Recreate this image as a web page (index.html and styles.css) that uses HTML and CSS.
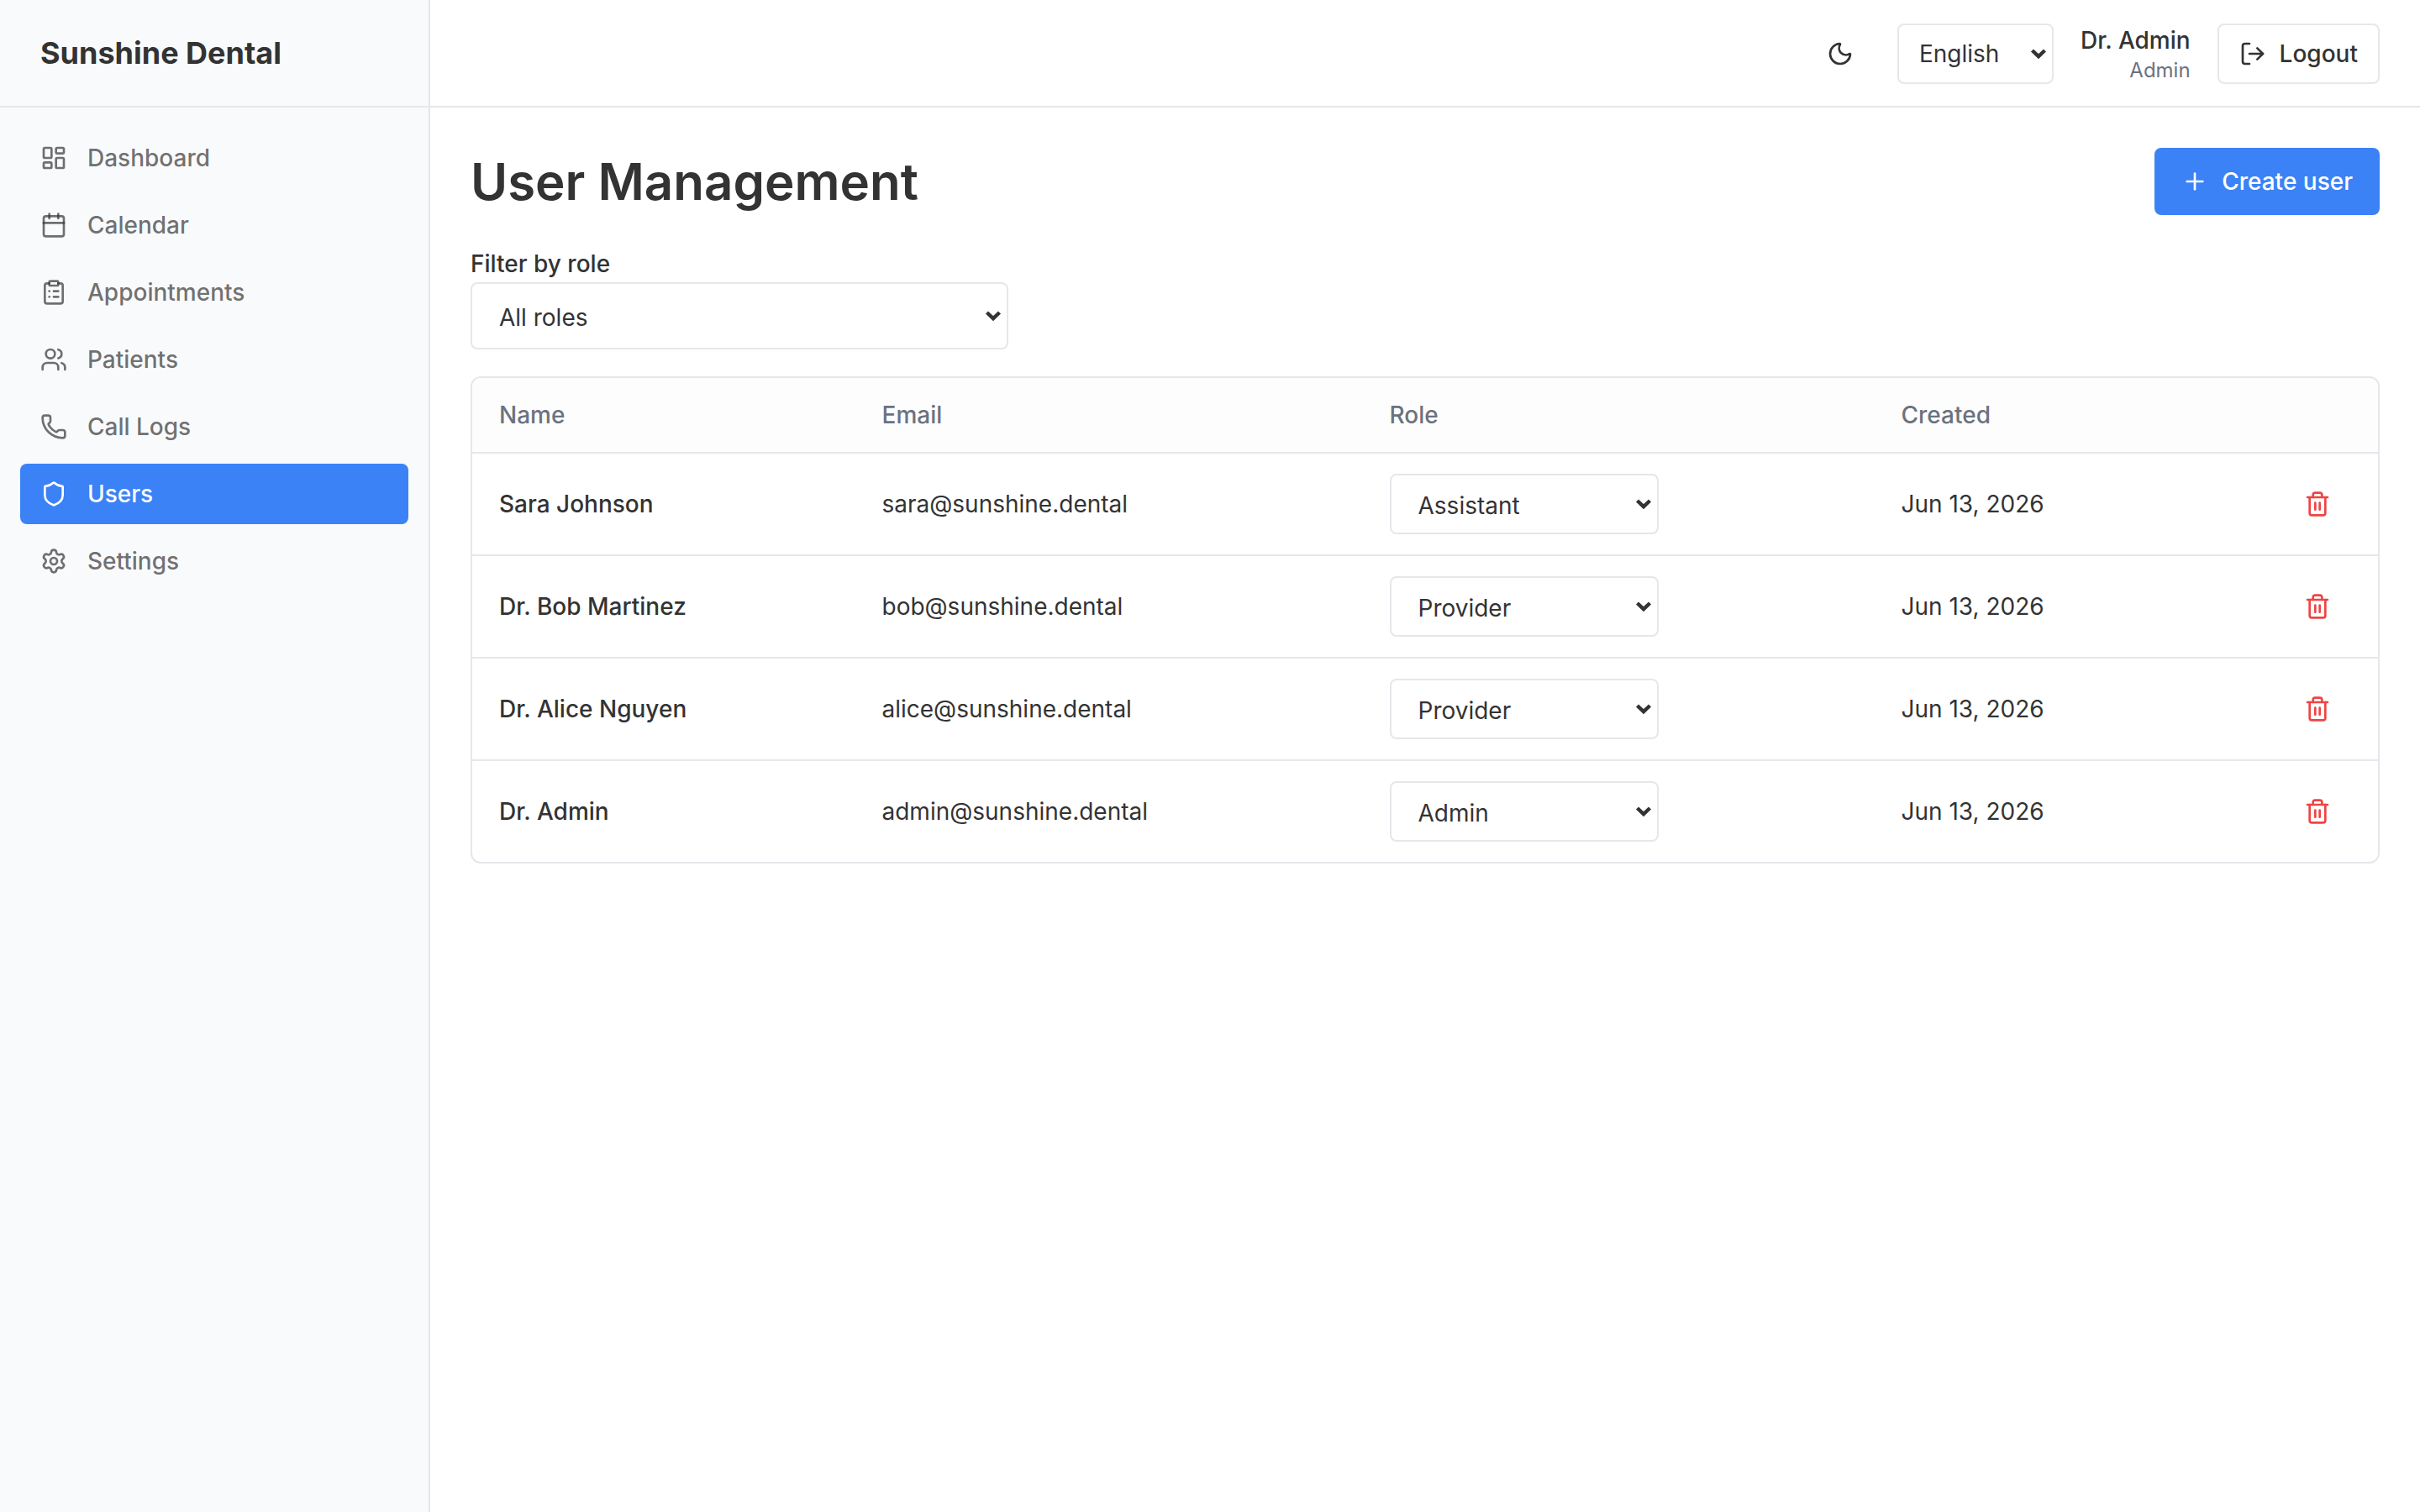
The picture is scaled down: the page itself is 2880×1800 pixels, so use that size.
FILE: index.html
```html
<!DOCTYPE html>
<html lang="en">
<head>
    <meta charset="UTF-8">
    <meta name="viewport" content="width=device-width, initial-scale=1.0">
    <title>User Management - Sunshine Dental</title>
    <link rel="stylesheet" href="styles.css">
</head>
<body>

    <!-- Shared icons -->
    <svg class="sprite" aria-hidden="true">
        <symbol id="chevron" viewBox="0 0 20 14">
            <path d="M2.5 3 10 10.2 17.5 3"/>
        </symbol>
        <symbol id="trash" viewBox="0 0 24 24">
            <path d="M3 6h18"/>
            <path d="M19 6v14a2 2 0 0 1-2 2H7a2 2 0 0 1-2-2V6"/>
            <path d="M8 6V4a2 2 0 0 1 2-2h4a2 2 0 0 1 2 2v2"/>
            <path d="M10 11v6"/>
            <path d="M14 11v6"/>
        </symbol>
    </svg>

    <!-- Sidebar -->
    <aside class="sidebar">
        <div class="brand">Sunshine Dental</div>
        <nav class="nav">
            <a class="nav-link" href="#">
                <svg class="icon" viewBox="0 0 24 24"><rect x="3" y="3" width="7" height="9" rx="1"/><rect x="14" y="3" width="7" height="5" rx="1"/><rect x="14" y="12" width="7" height="9" rx="1"/><rect x="3" y="16" width="7" height="5" rx="1"/></svg>
                Dashboard
            </a>
            <a class="nav-link" href="#">
                <svg class="icon" viewBox="0 0 24 24"><path d="M8 2v4"/><path d="M16 2v4"/><rect x="3" y="4" width="18" height="18" rx="2"/><path d="M3 10h18"/></svg>
                Calendar
            </a>
            <a class="nav-link" href="#">
                <svg class="icon" viewBox="0 0 24 24"><rect x="8" y="2" width="8" height="4" rx="1"/><path d="M16 4h2a2 2 0 0 1 2 2v14a2 2 0 0 1-2 2H6a2 2 0 0 1-2-2V6a2 2 0 0 1 2-2h2"/><path d="M12 11h4"/><path d="M12 16h4"/><path d="M8 11h.01"/><path d="M8 16h.01"/></svg>
                Appointments
            </a>
            <a class="nav-link" href="#">
                <svg class="icon" viewBox="0 0 24 24"><path d="M16 21v-2a4 4 0 0 0-4-4H6a4 4 0 0 0-4 4v2"/><path d="M16 3.128a4 4 0 0 1 0 7.744"/><path d="M22 21v-2a4 4 0 0 0-3-3.87"/><circle cx="9" cy="7" r="4"/></svg>
                Patients
            </a>
            <a class="nav-link" href="#">
                <svg class="icon" viewBox="0 0 24 24"><path d="M13.832 16.568a1 1 0 0 0 1.213-.303l.355-.465A2 2 0 0 1 17 15h3a2 2 0 0 1 2 2v3a2 2 0 0 1-2 2A18 18 0 0 1 2 4a2 2 0 0 1 2-2h3a2 2 0 0 1 2 2v3a2 2 0 0 1-.8 1.6l-.468.351a1 1 0 0 0-.292 1.233 14 14 0 0 0 6.392 6.384"/></svg>
                Call Logs
            </a>
            <a class="nav-link active" href="#">
                <svg class="icon" viewBox="0 0 24 24"><path d="M20 13c0 5-3.5 7.5-7.66 8.95a1 1 0 0 1-.67-.01C7.5 20.5 4 18 4 13V6a1 1 0 0 1 1-1c2 0 4.5-1.2 6.24-2.72a1.17 1.17 0 0 1 1.52 0C14.51 3.81 17 5 19 5a1 1 0 0 1 1 1z"/></svg>
                Users
            </a>
            <a class="nav-link" href="#">
                <svg class="icon" viewBox="0 0 24 24"><path d="M9.671 4.136a2.34 2.34 0 0 1 4.659 0 2.34 2.34 0 0 0 3.319 1.915 2.34 2.34 0 0 1 2.33 4.033 2.34 2.34 0 0 0 0 3.831 2.34 2.34 0 0 1-2.33 4.033 2.34 2.34 0 0 0-3.319 1.915 2.34 2.34 0 0 1-4.659 0 2.34 2.34 0 0 0-3.32-1.915 2.34 2.34 0 0 1-2.33-4.033 2.34 2.34 0 0 0 0-3.831A2.34 2.34 0 0 1 6.35 6.051a2.34 2.34 0 0 0 3.319-1.915"/><circle cx="12" cy="12" r="3"/></svg>
                Settings
            </a>
        </nav>
    </aside>

    <div class="page">
        <!-- Top bar -->
        <header class="topbar">
            <button class="icon-button" type="button" aria-label="Toggle theme">
                <svg class="icon" viewBox="0 0 24 24"><path d="M20.985 12.486a9 9 0 1 1-9.473-9.472c.405-.022.617.46.402.803a6 6 0 0 0 8.268 8.268c.344-.215.825-.004.803.401"/></svg>
            </button>
            <div class="select select-language">
                <select aria-label="Language"><option>English</option></select>
                <svg class="chevron"><use href="#chevron"/></svg>
            </div>
            <div class="account">
                <span class="account-name">Dr. Admin</span>
                <span class="account-role">Admin</span>
            </div>
            <button class="button button-outline" type="button">
                <svg class="icon" viewBox="0 0 24 24"><path d="m16 17 5-5-5-5"/><path d="M21 12H9"/><path d="M9 21H5a2 2 0 0 1-2-2V5a2 2 0 0 1 2-2h4"/></svg>
                Logout
            </button>
        </header>

        <!-- Main content -->
        <main class="content">
            <div class="title-row">
                <h1>User Management</h1>
                <button class="button button-primary" type="button">
                    <svg class="icon" viewBox="0 0 24 24"><path d="M5 12h14"/><path d="M12 5v14"/></svg>
                    Create user
                </button>
            </div>

            <div class="filter">
                <label for="role-filter">Filter by role</label>
                <div class="select select-filter">
                    <select id="role-filter"><option>All roles</option></select>
                    <svg class="chevron"><use href="#chevron"/></svg>
                </div>
            </div>

            <div class="table-wrap">
                <table>
                    <colgroup>
                        <col class="col-name">
                        <col class="col-email">
                        <col class="col-role">
                        <col class="col-created">
                        <col>
                    </colgroup>
                    <thead>
                        <tr><th>Name</th><th>Email</th><th>Role</th><th>Created</th><th></th></tr>
                    </thead>
                    <tbody>
                        <tr>
                            <td class="name">Sara Johnson</td>
                            <td>sara@sunshine.dental</td>
                            <td>
                                <div class="select select-role">
                                    <select aria-label="Role"><option>Assistant</option></select>
                                    <svg class="chevron"><use href="#chevron"/></svg>
                                </div>
                            </td>
                            <td>Jun 13, 2026</td>
                            <td><button class="icon-button delete" type="button" aria-label="Delete"><svg class="icon"><use href="#trash"/></svg></button></td>
                        </tr>
                        <tr>
                            <td class="name">Dr. Bob Martinez</td>
                            <td>bob@sunshine.dental</td>
                            <td>
                                <div class="select select-role">
                                    <select aria-label="Role"><option>Provider</option></select>
                                    <svg class="chevron"><use href="#chevron"/></svg>
                                </div>
                            </td>
                            <td>Jun 13, 2026</td>
                            <td><button class="icon-button delete" type="button" aria-label="Delete"><svg class="icon"><use href="#trash"/></svg></button></td>
                        </tr>
                        <tr>
                            <td class="name">Dr. Alice Nguyen</td>
                            <td>alice@sunshine.dental</td>
                            <td>
                                <div class="select select-role">
                                    <select aria-label="Role"><option>Provider</option></select>
                                    <svg class="chevron"><use href="#chevron"/></svg>
                                </div>
                            </td>
                            <td>Jun 13, 2026</td>
                            <td><button class="icon-button delete" type="button" aria-label="Delete"><svg class="icon"><use href="#trash"/></svg></button></td>
                        </tr>
                        <tr>
                            <td class="name">Dr. Admin</td>
                            <td>admin@sunshine.dental</td>
                            <td>
                                <div class="select select-role">
                                    <select aria-label="Role"><option>Admin</option></select>
                                    <svg class="chevron"><use href="#chevron"/></svg>
                                </div>
                            </td>
                            <td>Jun 13, 2026</td>
                            <td><button class="icon-button delete" type="button" aria-label="Delete"><svg class="icon"><use href="#trash"/></svg></button></td>
                        </tr>
                    </tbody>
                </table>
            </div>
        </main>
    </div>

</body>
</html>
```
FILE: styles.css
```css
* {
    box-sizing: border-box;
}

body {
    font-family: Inter, "Liberation Sans", sans-serif;
    font-size: 28px;
    line-height: 40px;
    color: #333;
    background-color: #fff;
    margin: 0;
    display: flex;
    height: 100vh;
}

button,
select {
    font: inherit;
    color: inherit;
    margin: 0;
}

.sprite {
    display: none;
}

.icon {
    width: 32px;
    height: 32px;
    flex-shrink: 0;
    fill: none;
    stroke: currentColor;
    stroke-width: 2;
    stroke-linecap: round;
    stroke-linejoin: round;
}

/* Sidebar */
.sidebar {
    width: 512px;
    flex-shrink: 0;
    background-color: #f9fafc;
    border-right: 2px solid #e5e7eb;
}

.brand {
    height: 128px;
    padding: 0 48px;
    display: flex;
    align-items: center;
    border-bottom: 2px solid #e5e7eb;
    font-size: 36px;
    font-weight: 700;
}

.nav {
    padding: 24px;
    display: flex;
    flex-direction: column;
    gap: 8px;
}

.nav-link {
    height: 72px;
    padding: 0 24px;
    display: flex;
    align-items: center;
    gap: 24px;
    border-radius: 8px;
    color: rgba(51, 51, 51, 0.7);
    font-weight: 500;
    text-decoration: none;
}

.nav-link.active {
    background-color: #3b82f6;
    color: #fff;
}

/* Top bar */
.page {
    flex: 1;
    min-width: 0;
}

.topbar {
    height: 128px;
    padding: 2px 48px 0;
    display: flex;
    align-items: center;
    justify-content: flex-end;
    gap: 32px;
    border-bottom: 2px solid #e5e7eb;
}

.account {
    display: flex;
    flex-direction: column;
    text-align: right;
}

.account-name {
    font-weight: 500;
}

.account-role {
    font-size: 24px;
    line-height: 32px;
    color: #6b7280;
}

/* Buttons */
.button {
    display: flex;
    align-items: center;
    gap: 16px;
    border: none;
    border-radius: 8px;
    font-weight: 500;
    cursor: pointer;
}

.button-outline {
    height: 72px;
    padding: 0 24px;
    background-color: #fff;
    border: 2px solid #e5e7eb;
}

.button-primary {
    height: 80px;
    padding: 0 32px;
    background-color: #3b82f6;
    color: #fff;
}

.icon-button {
    width: 72px;
    height: 72px;
    padding: 0;
    display: flex;
    align-items: center;
    justify-content: center;
    background: none;
    border: none;
    cursor: pointer;
}

.delete {
    color: #ef4444;
}

/* Selects */
.select {
    position: relative;
}

.select select {
    display: block;
    width: 100%;
    height: 100%;
    padding: 4px 32px 0;
    appearance: none;
    background-color: #fff;
    border: 2px solid #e5e7eb;
    border-radius: 8px;
}

.chevron {
    position: absolute;
    right: 8px;
    top: 50%;
    width: 20px;
    height: 14px;
    margin-top: -7px;
    fill: none;
    stroke: #333;
    stroke-width: 4.4;
    pointer-events: none;
}

.select-language {
    width: 186px;
    height: 72px;
}

.select-language select {
    padding: 0 24px;
}

.select-filter {
    width: 640px;
    height: 80px;
}

.select-role {
    width: 320px;
    height: 72px;
}

/* Content */
.content {
    padding: 48px;
}

.title-row {
    display: flex;
    align-items: center;
    justify-content: space-between;
}

h1 {
    margin: 0;
    font-size: 60px;
    line-height: 72px;
    font-weight: 600;
}

.filter {
    margin: 38px 0 32px;
}

.filter label {
    display: block;
    margin-bottom: 2px;
    font-weight: 500;
}

/* Users table */
.table-wrap {
    border: 2px solid #e5e7eb;
    border-radius: 12px;
    overflow: hidden;
}

table {
    width: 100%;
    table-layout: fixed;
    border-collapse: separate;
    border-spacing: 0;
}

.col-name {
    width: 455.5px;
}

.col-email {
    width: 604px;
}

.col-role {
    width: 609px;
}

.col-created {
    width: 459.5px;
}

th {
    height: 90px;
    padding: 0 32px;
    background-color: #fdfdfd;
    border-bottom: 2px solid #e5e7eb;
    color: #6b7280;
    font-weight: 500;
    text-align: left;
}

td {
    height: 122px;
    padding: 0 32px;
    border-bottom: 2px solid #e5e7eb;
}

tr:last-child td {
    height: 120px;
    border-bottom: none;
}

thead tr:last-child th {
    height: 90px;
}

.name {
    font-weight: 500;
}
```
